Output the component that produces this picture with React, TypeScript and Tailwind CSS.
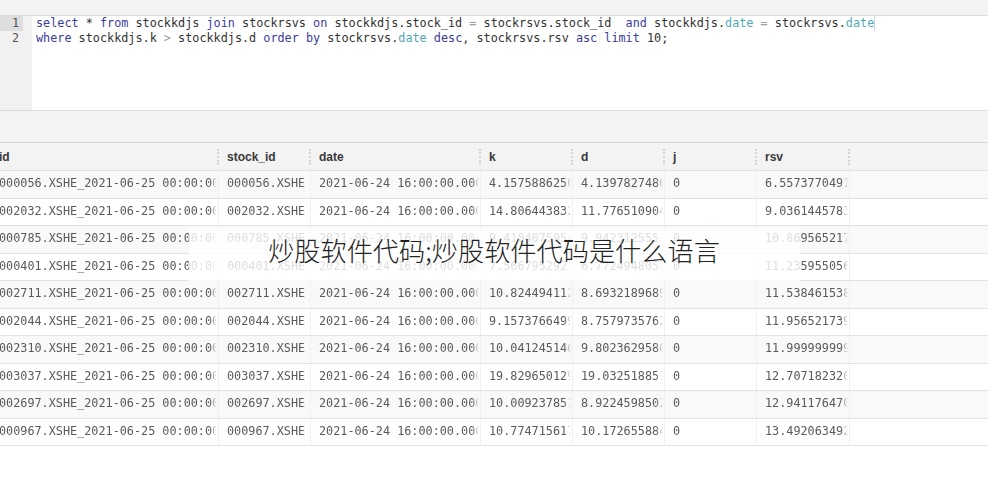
import React from "react";

const mono = "font-['DejaVu_Sans_Mono','Liberation_Mono',monospace]";

const cols = [
  { key: "id", w: "w-[228px]" },
  { key: "stock_id", w: "w-[92px]" },
  { key: "date", w: "w-[170px]" },
  { key: "k", w: "w-[92px]" },
  { key: "d", w: "w-[92px]" },
  { key: "j", w: "w-[92px]" },
  { key: "rsv", w: "w-[93px]" },
];

const rows: string[][] = [
  ["000056", "4.15758862505", "4.13978274861", "6.55737704918"],
  ["002032", "14.8064438325", "11.7765109041", "9.03614457831"],
  ["000785", "9.41040759541", "9.94231255512", "10.8695652173"],
  ["000401", "7.56679529211", "6.77249480582", "11.2359550561"],
  ["002711", "10.8244941121", "8.69321896891", "11.5384615385"],
  ["002044", "9.15737664991", "8.75797357621", "11.9565217391"],
  ["002310", "10.0412451461", "9.80236295801", "11.9999999999"],
  ["003037", "19.8296501291", "19.0325188511", "12.7071823201"],
  ["002697", "10.0092378511", "8.92245985021", "12.9411764701"],
  ["000967", "10.7747156171", "10.1726558841", "13.4920634921"],
];

const Kw = ({ children }: { children: React.ReactNode }) => (
  <span className="text-[#3a3c9c]">{children}</span>
);
const Fld = ({ children }: { children: React.ReactNode }) => (
  <span className="text-[#52a9b8]">{children}</span>
);
const Op = ({ children }: { children: React.ReactNode }) => (
  <span className="text-[#a0a0a0]">{children}</span>
);

const fade =
  "overflow-hidden whitespace-nowrap [mask-image:linear-gradient(to_right,black_calc(100%-8px),transparent_calc(100%-1px))]";

export default function App() {
  return (
    <div className="relative w-[988px] h-[490px] bg-white overflow-hidden">
      {/* top strip */}
      <div className="h-[16px] bg-[#f3f3f3] border-b border-[#dcdcdc]" />

      {/* editor */}
      <div className={`flex h-[95px] border-b border-[#dcdcdc] text-[11.8px] leading-[15px] ${mono}`}>
        <div className="w-[32px] bg-[#f1f1f1] text-[#555]">
          <div className="w-[23px] bg-[#dedede] pr-[4px] text-right">1</div>
          <div className="w-[23px] pr-[4px] text-right">2</div>
        </div>
        <div className="pl-[4px] text-[#333] whitespace-pre">
          <div className="flex">
            <span>
              <Kw>select</Kw> * <Kw>from</Kw> stockkdjs <Kw>join</Kw> stockrsvs <Kw>on</Kw> stockkdjs.stock_id{" "}
              <Op>=</Op> stockrsvs.stock_id  <Kw>and</Kw> stockkdjs.<Fld>date</Fld> <Op>=</Op> stockrsvs.<Fld>date</Fld>
            </span>
            <span className="w-px bg-[#c8d8e8]" />
          </div>
          <div>
            <Kw>where</Kw> stockkdjs.k <Op>&gt;</Op> stockkdjs.d <Kw>order</Kw> <Kw>by</Kw> stockrsvs.<Fld>date</Fld>{" "}
            <Kw>desc</Kw>, stockrsvs.rsv <Kw>asc</Kw> <Kw>limit</Kw> 10;
          </div>
        </div>
      </div>

      {/* toolbar gap */}
      <div className="h-[32px] bg-[#f3f3f3] border-b border-[#d8d8d8]" />

      {/* table header */}
      <div className="flex h-[28px] bg-[#f3f3f3] border-b border-[#e2e2e2] ml-[-9px] font-['Liberation_Sans',Arial,sans-serif] text-[12px] font-bold text-[#3a3a3a]">
        {cols.map(c => (
          <div key={c.key} className={`${c.w} shrink-0 flex items-center justify-between pl-2 pt-px`}>
            <span>{c.key}</span>
            <span className="h-[16px] border-r-2 border-dotted border-[#d4d4d4]" />
          </div>
        ))}
      </div>

      {/* rows */}
      <div className={`ml-[-9px] text-[11.8px] text-[#5a5a5a] ${mono}`}>
        {rows.map((r, i) => {
          const cells = [
            `${r[0]}.XSHE_2021-06-25 00:00:00`,
            `${r[0]}.XSHE`,
            "2021-06-24 16:00:00.000",
            r[1],
            r[2],
            "0",
            r[3],
          ];
          return (
            <div
              key={r[0]}
              className={`flex h-[27.5px] items-center border-b border-[#e2e2e2] ${
                i % 2 === 0 ? "bg-[#f9f9f9]" : "bg-white"
              }`}
            >
              {cells.map((v, j) => (
                <div
                  key={j}
                  className={`${cols[j].w} shrink-0 h-full flex items-center pl-2 border-r border-[#f0f0f0]`}
                >
                  <span className={`block w-full ${fade}`}>{v}</span>
                </div>
              ))}
            </div>
          );
        })}
      </div>

      {/* watermark */}
      <div className="absolute left-[189px] top-[228px] w-[611px] h-[53px] bg-white/80" />
      <div className="absolute left-0 right-0 top-[234px] text-center text-[26.2px] leading-[32px] text-[#222] font-light font-['Noto_Sans_CJK_SC','Noto_Sans',sans-serif]">
        炒股软件代码;炒股软件代码是什么语言
      </div>
    </div>
  );
}
